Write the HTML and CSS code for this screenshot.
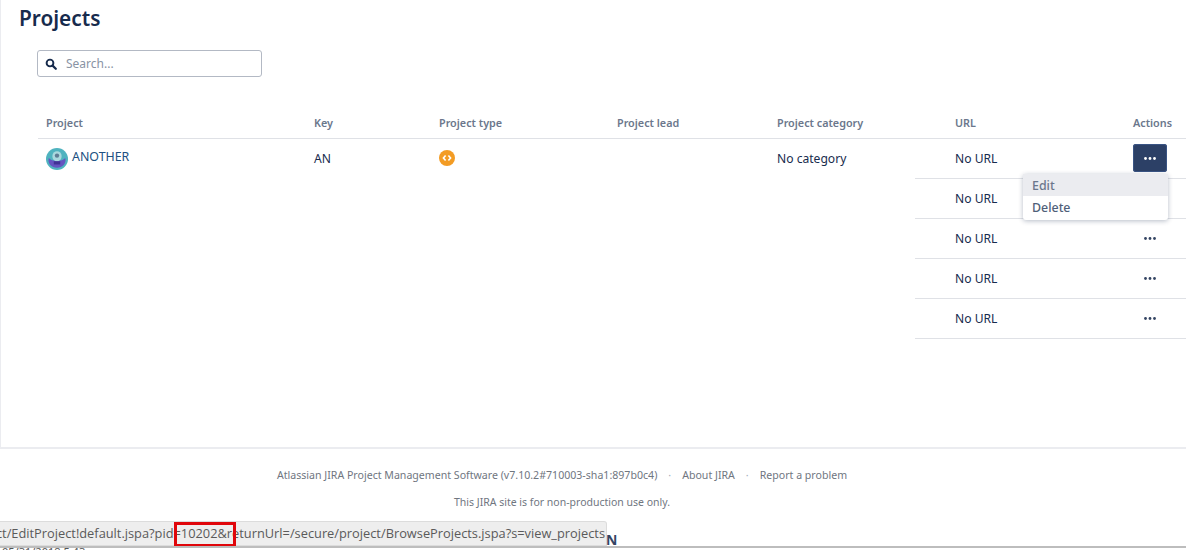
FILE: index.html
```html
<!DOCTYPE html>
<html lang="en">
<head>
<meta charset="utf-8">
<title>Projects</title>
<link rel="stylesheet" href="styles.css">
</head>
<body>
<div class="page">
  <main class="panel">
    <h1 class="title">Projects</h1>
    <div class="search">
      <svg class="search-icon" viewBox="0 0 12 12" width="12" height="12"><circle cx="5" cy="5" r="3.4" fill="none" stroke="#172b4d" stroke-width="1.9"/><path d="M7.6 7.6L10.8 10.8" stroke="#172b4d" stroke-width="2.2" stroke-linecap="round"/></svg>
      <span class="placeholder">Search...</span>
    </div>
    <div class="table">
      <div class="row head">
        <div>Project</div><div>Key</div><div>Project type</div><div>Project lead</div><div>Project category</div><div class="url">URL</div><div>Actions</div>
      </div>
      <div class="row body">
        <div class="name">
          <svg class="avatar" viewBox="0 0 24 24" width="22" height="22"><circle cx="12" cy="12" r="12" fill="#4fb3bf"/><path d="M3 11c2 1.500 3 2.500 5 2.500h8c2 0 3-1 5-2.500 1.500 6-3 10.500-9 10.500S1.500 17 3 11z" fill="#6554c0"/><rect x="7" y="3.500" width="10" height="11" rx="5" fill="#a9d8de"/><circle cx="12" cy="8.300" r="2.400" fill="#5e7c94"/><rect x="8.500" y="14.500" width="7" height="3.500" fill="#403294"/></svg>
          <a class="link">ANOTHER</a>
        </div>
        <div>AN</div>
        <div><svg class="type" viewBox="0 0 16 16" width="16" height="16"><circle cx="8" cy="8" r="8" fill="#f39c24"/><path d="M6.600 5.400L4.400 8l2.200 2.600M9.400 5.400L11.600 8 9.400 10.600" fill="none" stroke="#fff" stroke-width="1.600"/></svg></div>
        <div></div>
        <div>No category</div>
        <div class="url line">No URL</div>
        <div class="line"><button class="more on"><svg class="dots" viewBox="0 0 12 3" width="12" height="3"><circle cx="1.500" cy="1.500" r="1.400"/><circle cx="6" cy="1.500" r="1.400"/><circle cx="10.500" cy="1.500" r="1.400"/></svg></button></div>
      </div>
      <div class="row body"><div></div><div></div><div></div><div></div><div></div><div class="url line">No URL</div><div class="line"><button class="more"><svg class="dots" viewBox="0 0 12 3" width="12" height="3"><circle cx="1.500" cy="1.500" r="1.400"/><circle cx="6" cy="1.500" r="1.400"/><circle cx="10.500" cy="1.500" r="1.400"/></svg></button></div></div>
      <div class="row body"><div></div><div></div><div></div><div></div><div></div><div class="url line">No URL</div><div class="line"><button class="more"><svg class="dots" viewBox="0 0 12 3" width="12" height="3"><circle cx="1.500" cy="1.500" r="1.400"/><circle cx="6" cy="1.500" r="1.400"/><circle cx="10.500" cy="1.500" r="1.400"/></svg></button></div></div>
      <div class="row body"><div></div><div></div><div></div><div></div><div></div><div class="url line">No URL</div><div class="line"><button class="more"><svg class="dots" viewBox="0 0 12 3" width="12" height="3"><circle cx="1.500" cy="1.500" r="1.400"/><circle cx="6" cy="1.500" r="1.400"/><circle cx="10.500" cy="1.500" r="1.400"/></svg></button></div></div>
      <div class="row body"><div></div><div></div><div></div><div></div><div></div><div class="url line">No URL</div><div class="line"><button class="more"><svg class="dots" viewBox="0 0 12 3" width="12" height="3"><circle cx="1.500" cy="1.500" r="1.400"/><circle cx="6" cy="1.500" r="1.400"/><circle cx="10.500" cy="1.500" r="1.400"/></svg></button></div></div>
    </div>
    <div class="menu">
      <div class="item active">Edit</div>
      <div class="item">Delete</div>
    </div>
  </main>
  <footer class="footer">
    <div class="links"><span>Atlassian JIRA Project Management Software (v7.10.2#710003-sha1:897b0c4)</span><span class="dot">·</span><span>About JIRA</span><span class="dot">·</span><span>Report a problem</span></div>
    <div class="note">This JIRA site is for non-production use only.</div>
  </footer>
  <div class="status"><span class="status-text">ct/EditProject!default.jspa?pid=10202&amp;returnUrl=/secure/project/BrowseProjects.jspa?s=view_projects</span></div>
  <div class="callout"></div>
  <div class="peek">N</div>
  <div class="cut">05/31/2018 5:43</div>
</div>
</body>
</html>
```
FILE: styles.css
```css
* { box-sizing: border-box; }
html, body { margin: 0; height: 550px; overflow: hidden; background: #fff; }
body { font-family: "Noto Sans", "Open Sans", sans-serif; color: #172b4d; font-size: 13px; }
.page { position: relative; width: 1186px; height: 550px; overflow: hidden; }
.panel { position: relative; height: 449px; border-left: 1px solid #ebecf0; border-bottom: 2px solid #ebecf0; padding: 4px 0 0 18px; }
.title { margin: 0; font-size: 20.800px; line-height: 29px; font-weight: 600; color: #172b4d; }
.search { display: flex; align-items: center; width: 225px; height: 27px; margin: 17px 0 0 18px; padding-left: 7px; border: 1px solid #b3b9c4; border-radius: 3px; }
.search-icon { flex: none; }
.placeholder { margin-left: 9px; font-size: 12px; color: #8993a4; }
.table { margin: 36px 0 0 19px; }
.row { display: grid; grid-template-columns: 268px 125px 178px 160px 146px 210px 61px; }
.row > div { padding-left: 8px; display: flex; align-items: center; }
.head { height: 26px; border-bottom: 1px solid #dfe1e6; font-size: 10.800px; font-weight: 600; color: #6b778c; padding-bottom: 7px; }
.head > div { white-space: nowrap; }
.body { height: 40px; font-size: 12.100px; color: #172b4d; }
.body > div { padding-bottom: 1px; }
.body > .line { padding-bottom: 0; border-bottom: 1px solid #dfe1e6; }
.row > .url { padding-left: 40px; }
.name { gap: 4px; }
.avatar { flex: none; }
.link { color: #205081; font-size: 12.400px; margin-top: -5px; }
.type { display: block; margin-top: -2px; }
.more { display: flex; align-items: center; justify-content: center; width: 34px; height: 28px; margin-bottom: 1px; padding: 0; border: 0; border-radius: 3px; background: transparent; }
.dots { display: block; fill: #344563; }
.more.on { background: #2c4066; box-shadow: inset 0 0 0 1px #3a5484; }
.more.on .dots { fill: #fff; }
.menu { position: absolute; left: 1022px; top: 174px; width: 145px; height: 46px; background: #fff; border-radius: 3px; box-shadow: 0 1px 5px rgba(9,30,66,.3); font-size: 12.400px; font-weight: 500; color: #505f79; }
.item { height: 21px; line-height: 21px; padding-left: 9px; margin-top: 1px; }
.item.active { background: #ebecf0; margin-top: 0; height: 22px; line-height: 23px; color: #6b778c; }
.footer { padding: 19px 62px 0 0; text-align: center; font-size: 10.500px; color: #70767f; }
.links { display: flex; justify-content: center; gap: 11px; font-size: 10.600px; line-height: 15px; }
.dot { color: #a5adba; }
.note { margin-top: 12px; line-height: 15px; }
.status { position: absolute; left: 0; top: 521px; width: 607px; height: 25px; background: #eeeeee; border: 1px solid #dcdcdc; border-left: 0; border-radius: 0 3px 0 0; font-family: "Open Sans", sans-serif; font-size: 12.820px; line-height: 22px; color: #5a5a5a; overflow: hidden; display: flex; justify-content: flex-end; white-space: nowrap; }
.status-text { flex: none; padding-right: 1px; }
.callout { position: absolute; left: 174px; top: 522px; width: 62px; height: 25px; border: 3px solid #e0060b; }
.peek { position: absolute; left: 606px; top: 532px; font-family: "Open Sans", sans-serif; font-size: 14px; font-weight: 700; line-height: 16px; color: #344563; }
.cut { position: absolute; left: 0; top: 546px; width: 100%; height: 4px; overflow: hidden; padding-left: 2px; border-top: 2px solid #bdbdbd; background: #fff; font-size: 11px; line-height: 8px; color: #555; }
```
